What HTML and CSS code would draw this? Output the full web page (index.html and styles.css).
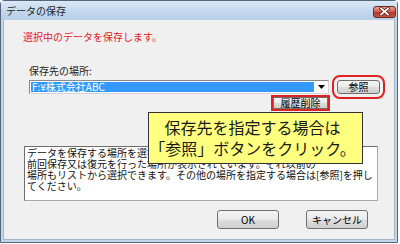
FILE: index.html
```html
<!DOCTYPE html>
<html lang="ja">
<head>
<meta charset="utf-8">
<title>データの保存</title>
<link rel="stylesheet" href="styles.css">
</head>
<body>
<div class="window">
  <div class="titlebar">
    <span class="title">データの保存</span>
    <span class="close" aria-label="閉じる">
      <svg width="11" height="9" viewBox="0 0 11 9"><path d="M2 1.5 L9 7.5 M9 1.5 L2 7.5" stroke="#5a1a10" stroke-width="3.2" stroke-linecap="square"/><path d="M2 1.5 L9 7.5 M9 1.5 L2 7.5" stroke="#fff" stroke-width="1.8" stroke-linecap="square"/></svg>
    </span>
  </div>
  <div class="body">
    <p class="lead">選択中のデータを保存します。</p>
    <div class="loc">
      <div class="label">保存先の場所:</div>
      <div class="loc-row">
        <div class="combo">
          <span class="combo-value">F:¥株式会社ABC</span>
          <span class="combo-arrow"><svg width="7" height="4" viewBox="0 0 7 4"><path d="M0 0 H7 L3.5 4 Z" fill="#000"/></svg></span>
        </div>
        <button class="btn btn-ref">参照</button>
      </div>
      <div class="hist-row">
        <button class="btn btn-hist">履歴削除</button>
      </div>
    </div>
    <div class="desc">データを保存する場所を選択してください。初期状態では、<br>前回保存又は復元を行った場所が表示されています。それ以前の<br>場所もリストから選択できます。その他の場所を指定する場合は[参照]を押し<br>てください。</div>
    <div class="actions">
      <button class="btn btn-main">OK</button>
      <button class="btn btn-main">キャンセル</button>
    </div>
  </div>
  <div class="callout">保存先を指定する場合は<br>「参照」ボタンをクリック。</div>
</div>
</body>
</html>
```

FILE: styles.css
```css
html, body {
  margin: 0;
  padding: 0;
  background: #ffffff;
}
body {
  width: 400px;
  height: 244px;
  overflow: hidden;
  font-family: "Noto Sans CJK JP", "Noto Sans", sans-serif;
  font-size: 10px;
  color: #000;
}
.window {
  position: relative;
  box-sizing: border-box;
  width: 398px;
  height: 243px;
  border: 1px solid #55657a;
  border-radius: 4px 4px 0 0;
  background: #c3d6ec;
  display: flex;
  flex-direction: column;
}
.titlebar {
  height: 19px;
  flex: none;
  display: flex;
  align-items: center;
  justify-content: space-between;
  padding: 0 1px 0 5px;
  background: linear-gradient(#dbe8f6, #c1d6ee 60%, #b7cfe9);
}
.title {
  font-size: 10px;
  line-height: 12px;
  color: #1e1e1e;
}
.close {
  width: 23px;
  height: 12px;
  margin-top: 2px;
  box-sizing: border-box;
  border: 1px solid #6b2a22;
  border-radius: 3px;
  background: linear-gradient(#e6a395, #cf5f4c 45%, #b93a28 55%, #c7553f);
  display: flex;
  align-items: center;
  justify-content: center;
}
.close svg { display: block; }
.body {
  flex: 1;
  margin: 0 2px 2px 2px;
  background: #f0f0f0;
  border: 1px solid #a5b6c8;
  border-top: 0;
  padding: 0 0 0 19px;
  position: relative;
}
.lead {
  margin: 11px 0 0 0;
  color: #e0201c;
  line-height: 12px;
}
.loc {
  margin: 22px 0 0 6px;
}
.label {
  line-height: 12px;
  color: #222;
}
.loc-row {
  display: flex;
  align-items: center;
  gap: 8px;
  margin-top: 3px;
}
.combo {
  box-sizing: border-box;
  width: 300px;
  height: 14px;
  border: 1px solid #8a8a8a;
  border-right-color: #d4d4d4;
  border-bottom-color: #d4d4d4;
  background: #fff;
  display: flex;
  align-items: stretch;
  padding: 1px 0 1px 1px;
}
.combo-value {
  flex: 1;
  display: flex;
  align-items: center;
  background: #3399ff;
  color: #fff;
  font-size: 10px;
  line-height: 10px;
  padding-left: 1px;
  white-space: nowrap;
}
.combo-arrow {
  width: 14px;
  display: flex;
  align-items: center;
  justify-content: center;
  background: #fff;
}
.btn {
  box-sizing: border-box;
  margin: 0;
  padding: 0;
  border: 1px solid #707070;
  border-radius: 2px;
  background: linear-gradient(#f4f4f4, #ececec 45%, #dcdcdc 55%, #cfcfcf);
  font-family: "Noto Sans CJK JP", "Noto Sans", sans-serif;
  font-size: 10px;
  line-height: 10px;
  color: #000;
}
.btn-ref {
  width: 43px;
  height: 14px;
  outline: 2px solid #dd2222;
  outline-offset: 3px;
  border-radius: 3px;
}
.hist-row {
  display: flex;
  justify-content: flex-end;
  width: 300px;
  margin-top: 3px;
}
.btn-hist {
  width: 55px;
  height: 12px;
  margin-right: 1px;
  border-radius: 0;
  outline: 2px solid #dd2222;
  outline-offset: 0;
}
.desc {
  box-sizing: border-box;
  width: 354px;
  height: 55px;
  margin: 37px 0 0 1px;
  background: #fff;
  border: 1px solid #a9a9a9;
  border-top-color: #6e6e6e;
  border-left-color: #6e6e6e;
  padding: 0 2px;
  font-size: 10px;
  line-height: 11px;
  white-space: nowrap;
  overflow: hidden;
  color: #111;
}
.actions {
  display: flex;
  gap: 27px;
  margin: 9px 0 0 194px;
}
.btn-main {
  width: 62px;
  height: 19px;
  border-radius: 3px;
}
.callout {
  position: absolute;
  left: 147px;
  top: 111px;
  width: 215px;
  height: 52px;
  box-sizing: border-box;
  background: #ffff80;
  border: 1px solid #333;
  padding: 4px 6px 0 0;
  font-size: 16px;
  line-height: 21px;
  color: #1a1a1a;
  text-align: center;
}
```
